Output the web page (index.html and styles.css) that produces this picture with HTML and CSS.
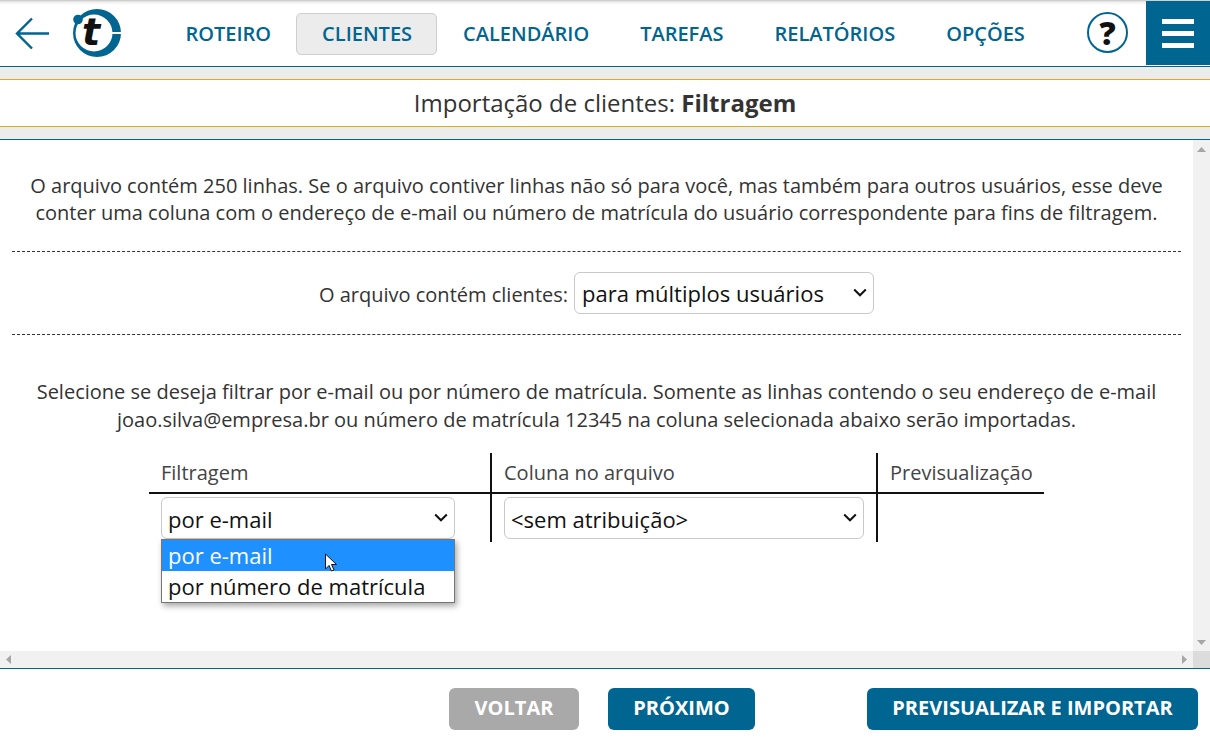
FILE: index.html
```html
<!DOCTYPE html>
<html lang="pt-BR">
<head>
<meta charset="utf-8">
<title>Importação de clientes</title>
<link rel="stylesheet" href="styles.css">
</head>
<body>
<div class="app">
  <header class="topbar">
    <div class="brand">
      <svg class="back" width="34" height="32" viewBox="0 0 34 32"><path d="M17 1.500 2 16.500l15 15M2 16.500h32" fill="none" stroke="#006591" stroke-width="2.400"/></svg>
      <svg class="logo" width="50" height="50" viewBox="0 0 50 50">
        <path fill-rule="evenodd" d="M1 25a24 24 0 1 0 48 0a24 24 0 1 0-48 0zM3.500 25a18.500 18.500 0 1 1 37 0a18.500 18.500 0 1 1-37 0z" fill="#006591"/>
        <rect x="40" y="24" width="10" height="2" fill="#fff"/>
        <circle cx="6" cy="11.500" r="4.800" fill="#006591"/>
        <text class="logo-t" x="10" y="37">t</text>
      </svg>
    </div>
    <nav class="nav">
      <a class="nav-item">ROTEIRO</a>
      <a class="nav-item active">CLIENTES</a>
      <a class="nav-item">CALENDÁRIO</a>
      <a class="nav-item">TAREFAS</a>
      <a class="nav-item">RELATÓRIOS</a>
      <a class="nav-item">OPÇÕES</a>
    </nav>
    <div class="top-actions">
      <div class="help">?</div>
      <div class="menu"><span></span><span></span><span></span></div>
    </div>
  </header>
  <div class="strip"></div>
  <h1 class="title">Importação de clientes: <b>Filtragem</b></h1>
  <div class="strip strip-low"></div>
  <main class="viewport">
    <div class="scroll-row">
      <div class="content">
        <p class="intro">O arquivo contém 250 linhas. Se o arquivo contiver linhas não só para você, mas também para outros usuários, esse deve<br>conter uma coluna com o endereço de e-mail ou número de matrícula do usuário correspondente para fins de filtragem.</p>
        <div class="choice">
          <span class="choice-label">O arquivo contém clientes:</span>
          <div class="select select-users">para múltiplos usuários<svg class="chev" width="14" height="9" viewBox="0 0 14 9"><path d="M1.200 1.500 7 7.300l5.800-5.800" fill="none" stroke="#111" stroke-width="2"/></svg></div>
        </div>
        <p class="explain">Selecione se deseja filtrar por e-mail ou por número de matrícula. Somente as linhas contendo o seu endereço de e-mail<br>joao.silva@empresa.br ou número de matrícula 12345 na coluna selecionada abaixo serão importadas.</p>
        <div class="grid">
          <div class="head c1">Filtragem</div>
          <div class="head c2">Coluna no arquivo</div>
          <div class="head c3">Previsualização</div>
          <div class="cell c1">
            <div class="select select-filter">por e-mail<svg class="chev" width="14" height="9" viewBox="0 0 14 9"><path d="M1.200 1.500 7 7.300l5.800-5.800" fill="none" stroke="#111" stroke-width="2"/></svg></div>
            <div class="dropdown">
              <div class="option selected">por e-mail</div>
              <div class="option">por número de matrícula</div>
              <svg class="cursor" width="14" height="20" viewBox="0 0 14 20"><path d="M1.500 1v15l3.500-3.500 2.500 5.500 2.500-1-2.500-5.500h5z" fill="#fff" stroke="#111" stroke-width="1"/></svg>
            </div>
          </div>
          <div class="cell c2">
            <div class="select select-column">&lt;sem atribuição&gt;<svg class="chev" width="14" height="9" viewBox="0 0 14 9"><path d="M1.200 1.500 7 7.300l5.800-5.800" fill="none" stroke="#111" stroke-width="2"/></svg></div>
          </div>
          <div class="cell c3"></div>
        </div>
      </div>
      <div class="vbar">
        <svg width="9" height="5" viewBox="0 0 9 5"><path d="M4.500 0 9 5H0z" fill="#a6a6a6"/></svg>
        <svg width="9" height="5" viewBox="0 0 9 5"><path d="M0 0h9L4.500 5z" fill="#a6a6a6"/></svg>
      </div>
    </div>
    <div class="hbar">
      <svg width="5" height="9" viewBox="0 0 5 9"><path d="M5 0v9L0 4.500z" fill="#a6a6a6"/></svg>
      <svg width="5" height="9" viewBox="0 0 5 9"><path d="M0 0v9l5-4.500z" fill="#a6a6a6"/></svg>
      <div class="corner"></div>
    </div>
  </main>
  <footer class="footer">
    <button class="btn btn-off">VOLTAR</button>
    <button class="btn btn-next">PRÓXIMO</button>
    <button class="btn btn-import">PREVISUALIZAR E IMPORTAR</button>
  </footer>
</div>
</body>
</html>
```
FILE: styles.css
```css
* { box-sizing: border-box; }
html, body { margin: 0; height: 100%; overflow: hidden; background: #fff; }
body { font-family: "Open Sans", sans-serif; color: #333; }
.app { width: 1210px; height: 748px; display: flex; flex-direction: column; }

.topbar { height: 67px; flex: none; display: flex; align-items: stretch; border-bottom: 1px solid #006591; background: linear-gradient(#c4c4c4, #efefef 2px, #fff 5px); }
.brand { width: 159.500px; flex: none; display: flex; align-items: flex-start; padding: 17px 0 0 15px; }
.back { flex: none; }
.logo { flex: none; margin: -9px 0 0 23px; overflow: visible; }
.logo-t { font-family: "DejaVu Sans", sans-serif; font-weight: 700; font-style: italic; font-size: 38px; fill: #111; }
.nav { display: flex; align-items: flex-start; padding-top: 13px; flex: 1; }
.nav-item { height: 42px; padding: 0 24px 2px 25px; display: flex; align-items: center; font-size: 20px; font-weight: 600; color: #006591; border: 1px solid transparent; border-radius: 5px; }
.nav-item.active { background: #ececec; border-color: #cfcfcf; }
.top-actions { display: flex; align-items: flex-start; flex: none; }
.help { width: 41px; height: 41px; margin: 12px 18px 0 0; border: 2px solid #006591; border-radius: 50%; display: flex; align-items: center; justify-content: center; font-size: 32px; font-weight: 800; color: #111; line-height: 1; }
.menu { width: 64px; height: 64px; margin-top: 1px; padding-top: 1px; background: #006591; display: flex; flex-direction: column; justify-content: center; align-items: center; gap: 7px; }
.menu span { display: block; width: 32px; height: 5px; background: #fff; }

.strip { height: 13px; flex: none; background: #ececec; border-bottom: 1px solid #e8a90f; }
.strip-low { border-bottom: 1px solid #006591; border-top: 1px solid #e8a90f; height: 14px; }
.title { height: 46px; flex: none; margin: 0; text-align: center; font-size: 24px; line-height: 46px; font-weight: 400; color: #333; }
.title b { font-weight: 700; }

.viewport { height: 529px; flex: none; display: flex; flex-direction: column; border-bottom: 1px solid #006591; }
.scroll-row { flex: 1; display: flex; min-height: 0; }
.content { flex: 1; padding: 32px 12px 0; font-size: 20px; line-height: 27.500px; color: #333; text-align: center; }
.intro, .explain { margin: 0; }
.intro { line-height: 27px; padding-bottom: 25px; border-bottom: 1px dashed #333; }
.choice { height: 83px; display: flex; align-items: center; justify-content: center; gap: 6px; border-bottom: 1px dashed #333; }
.choice-label { padding-top: 4px; }
.explain { padding-top: 43px; }

.select { position: relative; height: 42px; display: flex; align-items: center; padding: 2px 0 0 6px; font-size: 22px; color: #111; background: #fff; border: 1px solid #c9c9c9; border-radius: 6px; text-align: left; }
.chev { position: absolute; right: 6px; top: 15px; }
.select-users { width: 300px; padding-left: 7px; }
.select-filter { width: 294px; padding-top: 4px; }
.select-column { width: 360px; padding-top: 4px; }

.grid { display: grid; grid-template-columns: 341px 386px 168px; margin: 20px 0 0 137px; text-align: left; }
.head { height: 41px; padding: 6px 12px 0; border-bottom: 2px solid #111; color: #444; }
.cell { height: 48px; padding: 3px 12px 0; position: relative; }
.c2, .c3 { border-left: 2px solid #111; }
.dropdown { position: absolute; left: 12px; top: 45px; width: 294px; background: #fff; border: 1px solid #767676; box-shadow: 2px 3px 6px rgba(0,0,0,.35); z-index: 2; }
.option { height: 31px; padding-left: 6px; display: flex; align-items: center; font-size: 22px; color: #111; }
.option.selected { background: #1e90ff; color: #fff; }
.cursor { position: absolute; left: 162px; top: 13px; }

.vbar { width: 17px; flex: none; background: #f1f1f1; display: flex; flex-direction: column; justify-content: space-between; align-items: center; padding: 7px 0 6px; }
.hbar { height: 17px; flex: none; position: relative; background: #f1f1f1; display: flex; align-items: center; justify-content: space-between; padding: 0 23px 0 6px; }
.corner { position: absolute; right: 0; top: 0; width: 17px; height: 17px; background: #dcdcdc; }

.footer { flex: 1; display: flex; align-items: flex-start; padding-top: 19px; }
.btn { height: 42px; border: 0; border-radius: 6px; color: #fff; font-family: "Open Sans", sans-serif; font-size: 20px; font-weight: 700; padding: 0 0 3px; }
.btn-off { width: 130px; margin-left: 449px; background: #a9a9a9; }
.btn-next { width: 147px; margin-left: 29px; background: #006591; }
.btn-import { width: 331px; margin-left: 112px; background: #006591; }
```
